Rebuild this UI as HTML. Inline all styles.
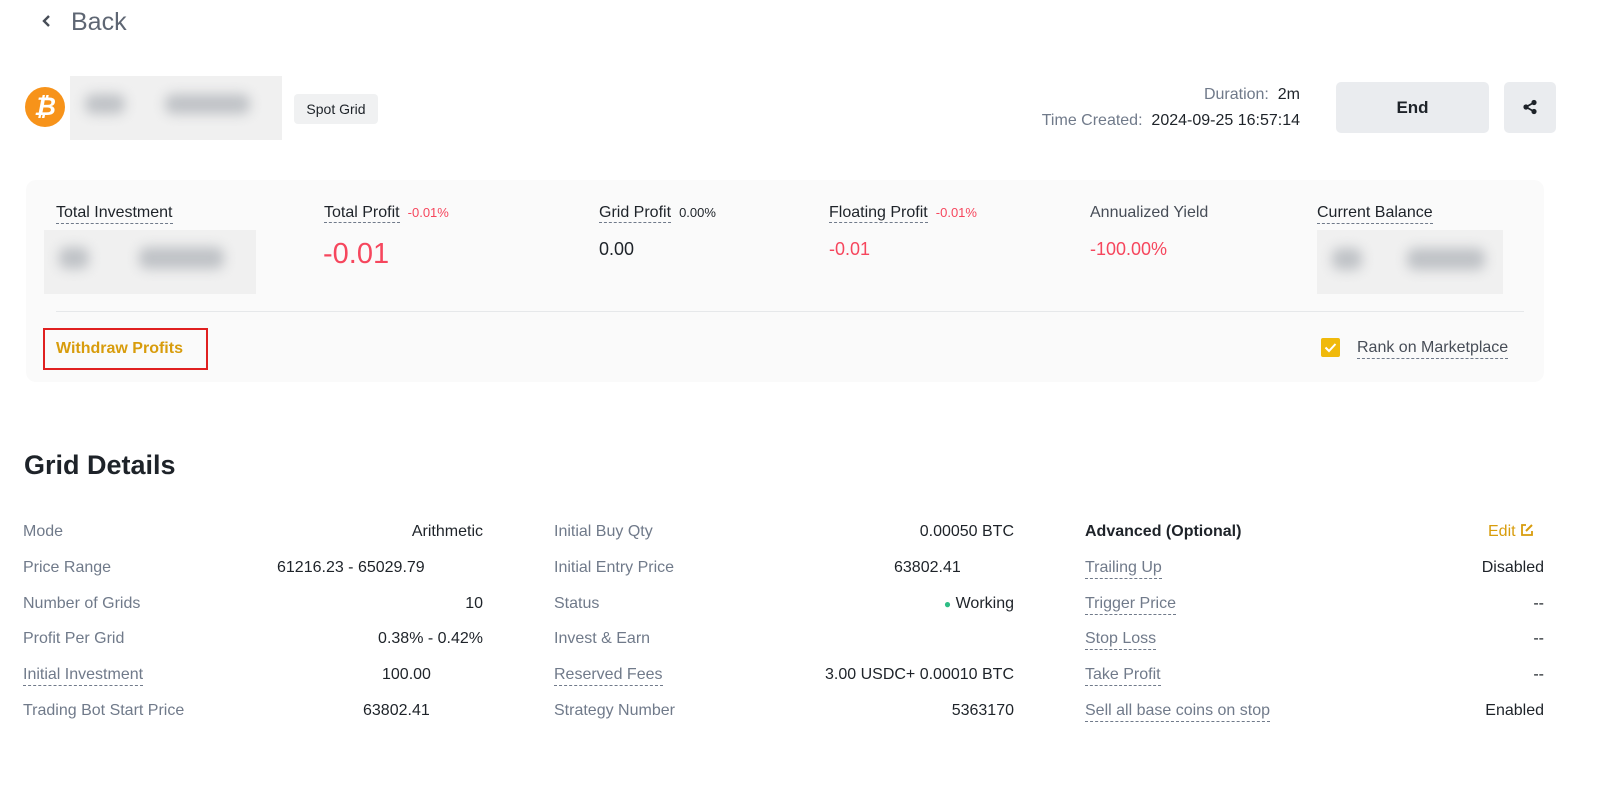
<!DOCTYPE html>
<html><head><meta charset="utf-8"><style>
*{margin:0;padding:0;box-sizing:border-box}
body{width:1600px;height:798px;background:#fff;font-family:"Liberation Sans",sans-serif;color:#1e2329;position:relative;overflow:hidden}
.a{position:absolute;white-space:nowrap}
.g{color:#707a8a}
.dash{border-bottom:1px dashed #707a8a;padding-bottom:1px}
.blur{position:absolute;background:#f0f0f0}
.blur i{position:absolute;background:#bfc2c6;filter:blur(6px);border-radius:8px}
.red{color:#f6465d}
.lbl{font-size:16px;color:#707a8a}
.val{font-size:16px;color:#1e2329;text-align:right}
</style></head><body>
<svg class="a" style="left:40px;top:14px" width="12" height="14" viewBox="0 0 12 14"><path d="M9 2L4 7l5 5" stroke="#474d57" stroke-width="2.4" fill="none"/></svg>
<div class="a" style="left:71px;top:8px;font-size:25px;color:#5e6673">Back</div>

<div class="a" style="left:25px;top:87px;width:40px;height:40px;border-radius:50%;background:#f7931a;color:#fff;font-weight:bold;font-size:25px;text-align:center;line-height:40px;font-style:italic">₿</div>
<div class="blur" style="left:70px;top:76px;width:212px;height:64px"><i style="left:15px;top:18px;width:40px;height:20px"></i><i style="left:95px;top:18px;width:85px;height:20px"></i></div>
<div class="a" style="left:294px;top:94px;width:84px;height:30px;background:#f0f1f2;border-radius:4px;font-size:14px;text-align:center;line-height:30px;color:#1e2329">Spot Grid</div>

<div class="a" style="right:300px;top:86px;font-size:16px"><span class="g">Duration:</span>&nbsp;&nbsp;2m</div>
<div class="a" style="right:300px;top:112px;font-size:16px"><span class="g">Time Created:</span>&nbsp;&nbsp;2024-09-25 16:57:14</div>
<div class="a" style="left:1336px;top:82px;width:153px;height:51px;background:#eaecef;border-radius:5px;font-size:17px;font-weight:bold;text-align:center;line-height:51px">End</div>
<div class="a" style="left:1504px;top:82px;width:52px;height:51px;background:#eaecef;border-radius:5px"><svg style="position:absolute;left:18px;top:17px" width="16" height="16" viewBox="0 0 16 16"><circle cx="12" cy="3.5" r="2.6" fill="#1e2329"/><circle cx="12" cy="12.5" r="2.6" fill="#1e2329"/><circle cx="4" cy="8" r="2.6" fill="#1e2329"/><path d="M12 3.5L4 8l8 4.5" stroke="#1e2329" stroke-width="1.8" fill="none"/></svg></div>

<div class="a" style="left:26px;top:180px;width:1518px;height:202px;background:#fafafa;border-radius:10px"></div>
<div class="a dash" style="left:56px;top:204px;font-size:16px;color:#1e2329">Total Investment</div>
<div class="blur" style="left:44px;top:230px;width:212px;height:64px"><i style="left:15px;top:17px;width:30px;height:22px"></i><i style="left:95px;top:17px;width:85px;height:22px"></i></div>
<div class="a" style="left:324px;top:204px;font-size:16px"><span class="dash">Total Profit</span> <span class="red" style="font-size:13px">&nbsp;-0.01%</span></div>
<div class="a red" style="left:323px;top:238px;font-size:29px">-0.01</div>
<div class="a" style="left:599px;top:204px;font-size:16px"><span class="dash">Grid Profit</span> <span style="font-size:13px">&nbsp;0.00%</span></div>
<div class="a" style="left:599px;top:239px;font-size:18px">0.00</div>
<div class="a" style="left:829px;top:204px;font-size:16px"><span class="dash">Floating Profit</span> <span class="red" style="font-size:13px">&nbsp;-0.01%</span></div>
<div class="a red" style="left:829px;top:239px;font-size:18px">-0.01</div>
<div class="a" style="left:1090px;top:204px;font-size:16px;color:#474d57">Annualized Yield</div>
<div class="a red" style="left:1090px;top:239px;font-size:18px">-100.00%</div>
<div class="a dash" style="left:1317px;top:204px;font-size:16px">Current Balance</div>
<div class="blur" style="left:1317px;top:230px;width:186px;height:64px"><i style="left:15px;top:18px;width:30px;height:22px"></i><i style="left:90px;top:18px;width:78px;height:22px"></i></div>
<div class="a" style="left:56px;top:311px;width:1468px;height:1px;background:#e6e8ea"></div>
<div class="a" style="left:43px;top:328px;width:165px;height:42px;border:2px solid #e02020"></div>
<div class="a" style="left:56px;top:340px;font-size:16px;font-weight:bold;color:#d89c0c">Withdraw Profits</div>
<div class="a" style="left:1321px;top:338px;width:19px;height:19px;background:#f0b90b;border-radius:2px"><svg width="19" height="19" viewBox="0 0 19 19"><path d="M4.5 9.5l3.5 3.5 6.5-7" stroke="#fff" stroke-width="2" fill="none"/></svg></div>
<div class="a dash" style="left:1357px;top:339px;font-size:16px;color:#474d57">Rank on Marketplace</div>

<div class="a" style="left:24px;top:450px;font-size:27px;font-weight:bold">Grid Details</div>

<div class="a lbl" style="left:23px;top:523px">Mode</div><div class="a val" style="right:1117px;top:523px">Arithmetic</div>
<div class="a lbl" style="left:23px;top:559px">Price Range</div><div class="a val" style="left:277px;top:559px">61216.23 - 65029.79</div>
<div class="a lbl" style="left:23px;top:595px">Number of Grids</div><div class="a val" style="right:1117px;top:595px">10</div>
<div class="a lbl" style="left:23px;top:630px">Profit Per Grid</div><div class="a val" style="right:1117px;top:630px">0.38% - 0.42%</div>
<div class="a lbl dash" style="left:23px;top:666px">Initial Investment</div><div class="a val" style="left:382px;top:666px">100.00</div>
<div class="a lbl" style="left:23px;top:702px">Trading Bot Start Price</div><div class="a val" style="left:363px;top:702px">63802.41</div>

<div class="a lbl" style="left:554px;top:523px">Initial Buy Qty</div><div class="a val" style="right:586px;top:523px">0.00050 BTC</div>
<div class="a lbl" style="left:554px;top:559px">Initial Entry Price</div><div class="a val" style="left:894px;top:559px">63802.41</div>
<div class="a lbl" style="left:554px;top:595px">Status</div><div class="a val" style="right:586px;top:595px"><span style="color:#2ebd85;font-size:12px">●</span> Working</div>
<div class="a lbl" style="left:554px;top:630px">Invest &amp; Earn</div>
<div class="a lbl dash" style="left:554px;top:666px">Reserved Fees</div><div class="a val" style="right:586px;top:666px">3.00 USDC+ 0.00010 BTC</div>
<div class="a lbl" style="left:554px;top:702px">Strategy Number</div><div class="a val" style="right:586px;top:702px">5363170</div>

<div class="a" style="left:1085px;top:523px;font-size:16px;font-weight:bold">Advanced (Optional)</div>
<div class="a" style="left:1488px;top:523px;font-size:16px;color:#d89c0c">Edit <svg width="14" height="14" viewBox="0 0 14 14" style="vertical-align:-1px"><path d="M6 2H2v10h10V8" stroke="#d89c0c" stroke-width="1.8" fill="none"/><path d="M6 8l6-6" stroke="#d89c0c" stroke-width="2"/></svg></div>
<div class="a lbl dash" style="left:1085px;top:559px">Trailing Up</div><div class="a val" style="right:56px;top:559px">Disabled</div>
<div class="a lbl dash" style="left:1085px;top:595px">Trigger Price</div><div class="a val" style="right:56px;top:595px">--</div>
<div class="a lbl dash" style="left:1085px;top:630px">Stop Loss</div><div class="a val" style="right:56px;top:630px">--</div>
<div class="a lbl dash" style="left:1085px;top:666px">Take Profit</div><div class="a val" style="right:56px;top:666px">--</div>
<div class="a lbl dash" style="left:1085px;top:702px">Sell all base coins on stop</div><div class="a val" style="right:56px;top:702px">Enabled</div>
</body></html>
